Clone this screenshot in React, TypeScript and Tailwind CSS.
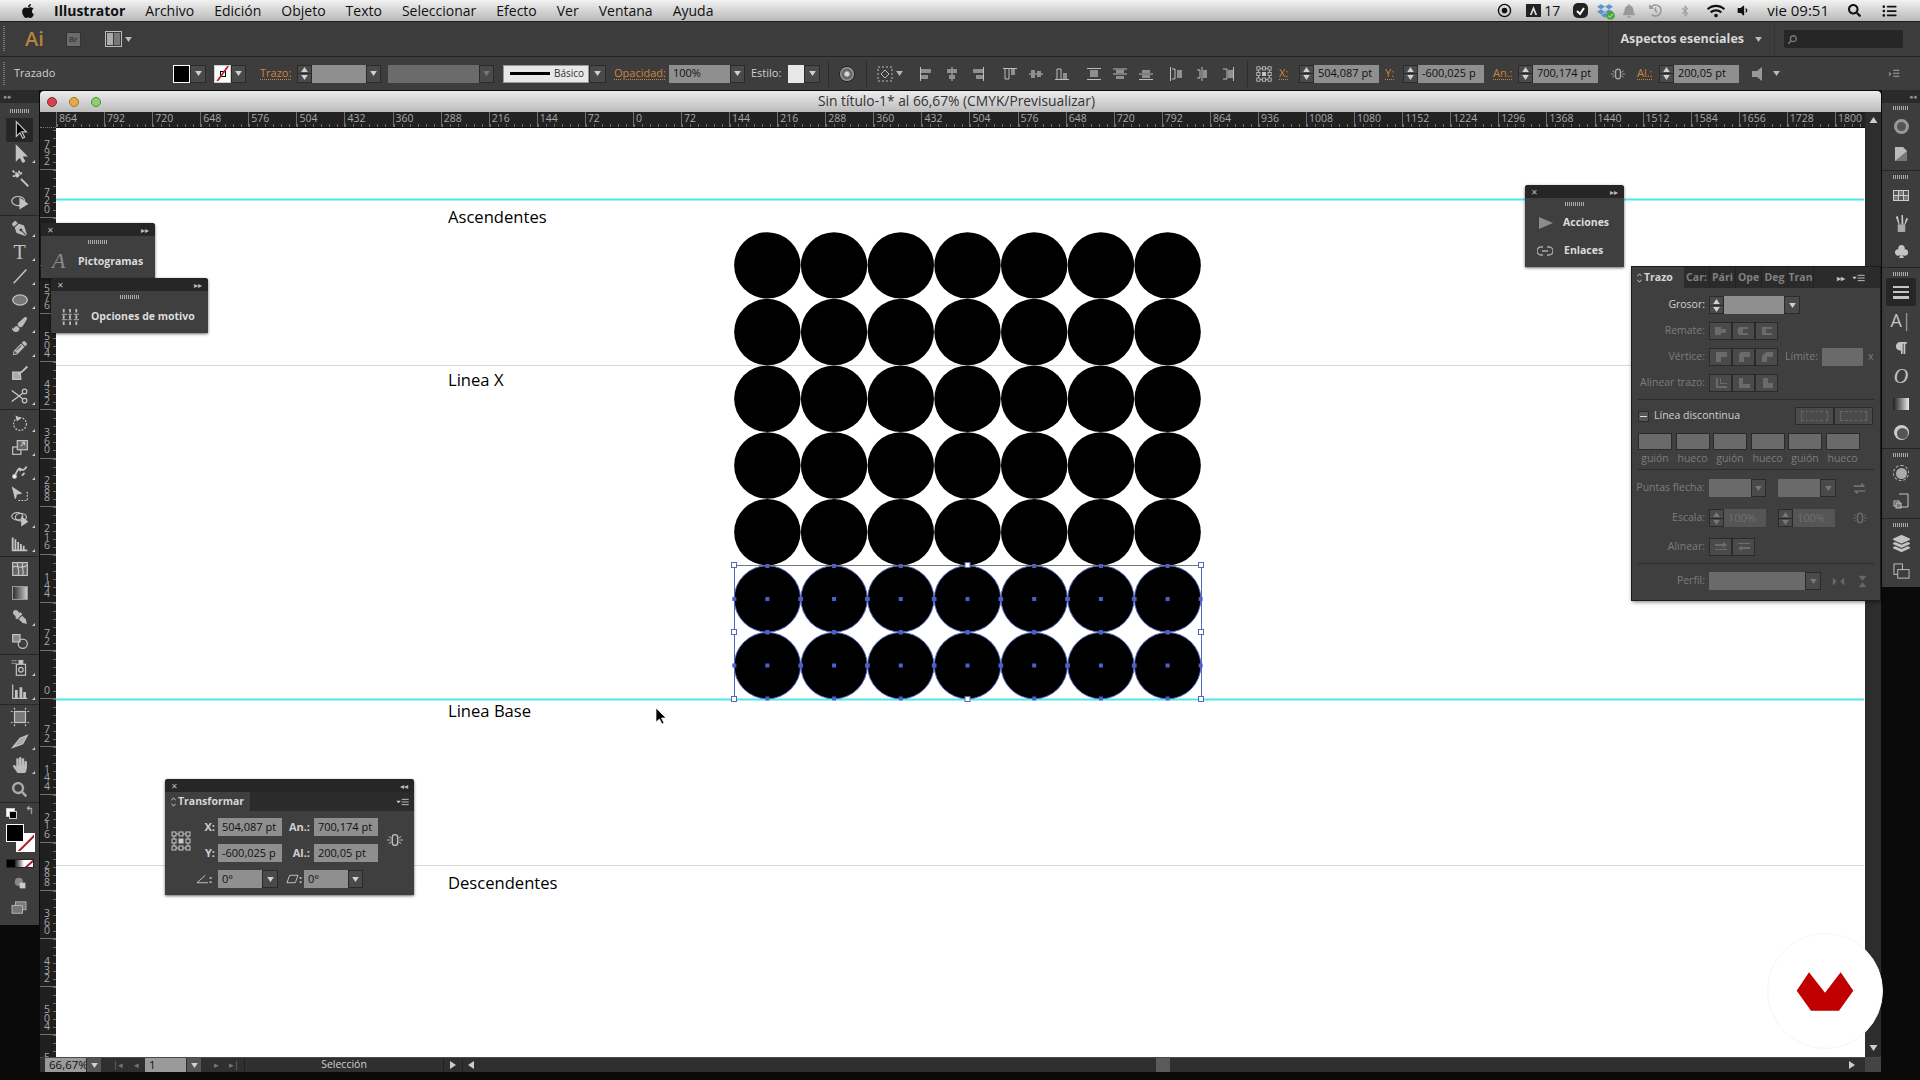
import React from 'react'
import clsx from 'clsx'
import { twMerge } from 'tailwind-merge'
import {
  FaApple, FaBell, FaBluetoothB, FaDropbox, FaEyeDropper, FaHandPaper, FaHistory, FaLayerGroup,
  FaListUl, FaParagraph, FaPaintBrush, FaPenNib, FaPencilAlt, FaSearch, FaVolumeDown, FaWifi, FaCheckCircle,
} from 'react-icons/fa'
import { BsFillSuitClubFill } from 'react-icons/bs'

const topLabels = [864, 792, 720, 648, 576, 504, 432, 360, 288, 216, 144, 72, 0, 72, 144, 216, 288, 360, 432, 504, 576, 648, 720, 792, 864, 936, 1008, 1080, 1152, 1224, 1296, 1368, 1440, 1512, 1584, 1656, 1728, 1800]
const sideLabels = [792, 720, 648, 576, 504, 432, 360, 288, 216, 144, 72, 0, 72, 144, 216, 288, 360, 432, 504, 576]

const Tri = ({ className }: { className?: string }) => (
  <svg viewBox="0 0 8 6" className={clsx('h-[5px] w-[7px] fill-current', className)}><path d="M0 0h8L4 6z" /></svg>
)

const Drop = ({ className, dim }: { className?: string; dim?: boolean }) => (
  <div className={twMerge('flex h-full items-center justify-center border border-[#2a2a2a] bg-[#4a4a4a]', dim ? 'text-[#777]' : 'text-[#d0d0d0]', className)}>
    <Tri />
  </div>
)

const Stepper = ({ dim }: { dim?: boolean }) => (
  <div className={clsx('flex h-full w-[15px] flex-col items-center justify-center gap-[1px] border border-[#2a2a2a] bg-[#4a4a4a]', dim ? 'text-[#777]' : 'text-[#d0d0d0]')}>
    <Tri className="h-[4px] rotate-180" />
    <div className="h-px w-full bg-[#2a2a2a]" />
    <Tri className="h-[4px]" />
  </div>
)

const Input = ({ className, children }: { className?: string; children?: React.ReactNode }) => (
  <div className={twMerge('flex h-full items-center overflow-hidden whitespace-nowrap bg-[#8f8f8f] pl-[4px] text-[11px] text-[#111]', className)}>{children}</div>
)

const Orange = ({ className, children }: { className?: string; children: React.ReactNode }) => (
  <span className={clsx('whitespace-nowrap text-[11px] text-[#c9853c] underline decoration-dotted underline-offset-2', className)}>{children}</span>
)

const Handle = ({ className }: { className?: string }) => (
  <div className={twMerge('h-[4px] w-[20px] bg-[repeating-linear-gradient(90deg,#aaa_0,#aaa_1px,transparent_1px,transparent_2px)]', className)} />
)

const RefPoint = ({ className }: { className?: string }) => (
  <svg viewBox="0 0 20 20" className={clsx('fill-none stroke-[#c8c8c8]', className)}>
    {[1, 8, 15].map(y => [1, 8, 15].map(x => (
      <rect key={`${x}${y}`} x={x} y={y} width="4" height="4" className={x === 8 && y === 8 ? 'fill-[#c8c8c8]' : ''} />
    )))}
    <path d="M5 3h3M12 3h3M5 17h3M12 17h3M3 5v3M3 12v3M17 5v3M17 12v3" />
  </svg>
)

const LinkIcon = ({ className }: { className?: string }) => (
  <svg viewBox="0 0 20 20" className={clsx('fill-none stroke-current', className)}>
    <rect x="7" y="4" width="6" height="12" rx="3" strokeWidth="1.6" />
    <path d="M3 6l3 2M3 14l3-2M17 6l-3 2M17 14l-3-2M1 10h4M15 10h4" />
  </svg>
)

const MenuIcon = ({ className }: { className?: string }) => (
  <svg viewBox="0 0 14 9" className={clsx('h-[8px] w-[13px]', className)}>
    <path d="M0 3h5L2.5 6z" className="fill-[#ccc]" />
    <path d="M6 1.5h8M6 4.5h8M6 7.5h8" className="stroke-[#ccc]" />
  </svg>
)

const UpDown = () => (
  <svg viewBox="0 0 6 12" className="mr-[2px] h-[10px] w-[5px] fill-none stroke-[#ddd]"><path d="M.5 4L3 1l2.5 3M.5 8L3 11l2.5-3" /></svg>
)

const AlignIcon = ({ d, r }: { d: string; r: string }) => (
  <div className="flex w-[26px] justify-center">
    <svg viewBox="0 0 16 16" className="h-[16px] w-[16px]">
      <path d={d} className="fill-none stroke-[#bdbdbd]" />
      <path d={r} className="fill-[#8f8f8f]" />
    </svg>
  </div>
)

const MenuBar = () => (
  <div className="flex h-[22px] items-center border-b border-[#1d1d1d] bg-gradient-to-b from-[#f2f2f2] to-[#b9b9b9] text-[14px] text-[#111]">
    <FaApple className="ml-[20px] h-[16px] w-[16px] text-[#111]" />
    <span className="ml-[18px] font-bold">Illustrator</span>
    <div className="ml-[20px] flex gap-[20px]">
      {['Archivo', 'Edición', 'Objeto', 'Texto', 'Seleccionar', 'Efecto', 'Ver', 'Ventana', 'Ayuda'].map(m => <span key={m}>{m}</span>)}
    </div>
    <div className="ml-auto flex items-center">
      <svg viewBox="0 0 16 16" className="h-[15px] w-[15px]"><circle cx="8" cy="8" r="6.5" className="fill-none stroke-[#111] stroke-[1.5]" /><circle cx="8" cy="8" r="3" className="fill-[#111]" /></svg>
      <div className="ml-[14px] flex h-[13px] w-[15px] items-center justify-center bg-[#222]"><svg viewBox="0 0 12 12" className="h-[11px] w-[11px]"><path d="M6 1L2 11h2l2-5 2 5h2z" className="fill-[#ddd]" /></svg></div>
      <span className="ml-[3px] text-[14px]">17</span>
      <div className="relative ml-[13px] h-[15px] w-[15px] rounded-[5px] bg-[#222]"><svg viewBox="0 0 15 15" className="h-[15px] w-[15px]"><path d="M4 8l3 3 4-6" className="fill-none stroke-white stroke-2" /></svg></div>
      <div className="relative ml-[9px]">
        <FaDropbox className="h-[16px] w-[16px] text-[#5b93cc]" />
        <FaCheckCircle className="absolute -bottom-[1px] -right-[2px] h-[9px] w-[9px] text-[#43a83a]" />
      </div>
      <FaBell className="ml-[9px] h-[14px] w-[14px] text-[#999]" />
      <FaHistory className="ml-[13px] h-[13px] w-[13px] text-[#999]" />
      <FaBluetoothB className="ml-[17px] h-[12px] w-[12px] text-[#999]" />
      <FaWifi className="ml-[16px] h-[16px] w-[18px] text-[#111]" />
      <FaVolumeDown className="ml-[12px] h-[13px] w-[11px] text-[#111]" />
      <span className="ml-[19px] text-[15px]">vie 09:51</span>
      <FaSearch className="ml-[19px] h-[13px] w-[13px] text-[#111]" />
      <FaListUl className="ml-[19px] mr-[21px] h-[14px] w-[19px] text-[#111]" />
    </div>
  </div>
)

const AppBar = () => (
  <div className="flex h-[35px] items-center border-b border-[#222] bg-[#3c3c3c]">
    <div className="ml-[3px] h-[26px] w-[2px] bg-[repeating-linear-gradient(180deg,#777_0,#777_1px,transparent_1px,transparent_2px)]" />
    <span className="ml-[20px] text-[20px] font-semibold leading-none text-[#b5843c]">Ai</span>
    <div className="ml-[22px] flex h-[15px] w-[15px] items-center justify-center border border-[#333] bg-[#6b6b6b] text-[8px] text-[#222]">Br</div>
    <div className="ml-[24px] flex h-[16px] w-[17px] gap-px border border-[#bbb] p-px">
      <div className="w-[6px] bg-[#aaa]" />
      <div className="flex-1 bg-[#777]" />
    </div>
    <Tri className="ml-[3px] text-[#bbb]" />
    <div className="ml-auto flex h-full items-center">
      <div className="h-full w-px bg-[#333]" />
      <span className="ml-[11px] text-[12.5px] font-bold text-[#d8d8d8]">Aspectos esenciales</span>
      <Tri className="ml-[11px] h-[3px] w-[5px] text-[#bbb]" />
      <div className="ml-[12px] h-full w-px bg-[#333]" />
      <div className="ml-[9px] mr-[17px] flex h-[18px] w-[119px] items-center rounded-[2px] bg-[#262626] pl-[4px]">
        <FaSearch className="h-[9px] w-[9px] -scale-x-100 text-[#777]" />
      </div>
    </div>
  </div>
)

const ControlBar = () => (
  <div className="flex h-[33px] items-center bg-[#3d3d3d] text-[#d0d0d0]">
    <div className="ml-[3px] h-[24px] w-[2px] bg-[repeating-linear-gradient(180deg,#777_0,#777_1px,transparent_1px,transparent_2px)]" />
    <span className="ml-[9px] w-[159px] text-[11px]">Trazado</span>
    <div className="flex h-[18px] items-center">
      <div className="h-full w-[17px] border border-white bg-black" />
      <Drop className="w-[16px]" />
      <div className="relative ml-[8px] h-full w-[17px] overflow-hidden border border-[#ccc] bg-white">
        <div className="absolute left-[5px] top-[5px] h-[6px] w-[6px] border border-black" />
        <svg viewBox="0 0 17 18" className="absolute inset-0"><path d="M2 18L15 0" className="stroke-[#c22033] stroke-2" /></svg>
      </div>
      <Drop className="w-[15px]" />
      <Orange className="ml-[14px] w-[31px]">Trazo:</Orange>
      <div className="ml-[6px] flex h-full"><Stepper /><Input className="w-[54px]" /><Drop className="w-[15px]" /></div>
      <div className="ml-[7px] flex h-full"><Input className="w-[91px] bg-[#6b6b6b]" /><Drop dim className="w-[15px]" /></div>
      <div className="ml-[9px] flex h-full">
        <div className="flex h-full w-[86px] items-center border border-[#999] bg-[#e8e8e8]">
          <div className="ml-[6px] h-[3px] w-[40px] bg-black" />
          <span className="ml-[4px] text-[10px] text-[#333]">Básico</span>
        </div>
        <Drop className="w-[17px]" />
      </div>
      <Orange className="ml-[8px] w-[49px]">Opacidad:</Orange>
      <div className="ml-[6px] flex h-full"><Input className="w-[61px]">100%</Input><Drop className="w-[15px]" /></div>
      <span className="ml-[6px] w-[29px] text-[11px]">Estilo:</span>
      <div className="ml-[8px] flex h-full"><div className="h-full w-[16px] bg-[#e8e8e8]" /><Drop className="w-[16px]" /></div>
    </div>
    <div className="ml-[8px] h-[26px] w-px bg-[#2c2c2c]" />
    <div className="ml-[10px] h-[16px] w-[16px] rounded-full border border-[#222] bg-[radial-gradient(circle_at_center,#ddd_15%,#555_40%,#aaa_70%,#666_100%)]" />
    <div className="ml-[11px] h-[26px] w-px bg-[#2c2c2c]" />
    <svg viewBox="0 0 16 16" className="ml-[10px] h-[16px] w-[16px] fill-none stroke-[#bbb]"><rect x="1" y="1" width="14" height="14" strokeDasharray="2 2" /><path d="M8 4l4 4-4 4-4-4z" /></svg>
    <Tri className="ml-[3px] text-[#bbb]" />
    <div className="ml-[10px] flex">
      <AlignIcon d="M2.5 1v14" r="M3 3h10v4H3zM3 9h7v4H3z" />
      <AlignIcon d="M8 1v14" r="M3 3h10v4H3zM5 9h6v4H5z" />
      <AlignIcon d="M13.5 1v14" r="M3 3h10v4H3zM6 9h7v4H6z" />
    </div>
    <div className="ml-[6px] flex">
      <AlignIcon d="M1 2.5h14M3 3v10h4V3" r="M9 3h4v6H9z" />
      <AlignIcon d="M1 8h14" r="M3 4h4v8H3zM9 5h4v6H9z" />
      <AlignIcon d="M1 13.5h14M3 13V3h4v10" r="M9 7h4v6H9z" />
    </div>
    <div className="ml-[6px] flex">
      <AlignIcon d="M1 2.5h14M1 13.5h14" r="M4 4h8v7H4z" />
      <AlignIcon d="M1 8h14M1 3h14" r="M4 4h8v3H4zM4 10h8v3H4z" />
      <AlignIcon d="M1 13.5h14M1 8h14" r="M4 4h8v3H4zM4 9h8v3H4z" />
    </div>
    <div className="ml-[4px] flex">
      <AlignIcon d="M2.5 1v14M4 3h3v10H4" r="M9 4h5v8H9z" />
      <AlignIcon d="M8 1v14M3 4h3v8H3" r="M9 4h4v8H9z" />
      <AlignIcon d="M13.5 1v14M3 3h4v10H3" r="M8 4h5v8H8z" />
    </div>
    <div className="ml-[6px] h-[26px] w-px bg-[#2c2c2c]" />
    <RefPoint className="ml-[8px] h-[16px] w-[16px]" />
    <Orange className="ml-[7px] w-[9px]">X:</Orange>
    <div className="ml-[11px] flex h-[18px]"><Stepper /><Input className="w-[65px]">504,087 pt</Input></div>
    <Orange className="ml-[6px] w-[9px]">Y:</Orange>
    <div className="ml-[9px] flex h-[18px]"><Stepper /><Input className="w-[66px]">-600,025 p</Input></div>
    <Orange className="ml-[9px] w-[18px]">An.:</Orange>
    <div className="ml-[7px] flex h-[18px]"><Stepper /><Input className="w-[65px]">700,174 pt</Input></div>
    <LinkIcon className="ml-[12px] h-[16px] w-[16px] text-[#aaa]" />
    <Orange className="ml-[11px] w-[15px]">Al.:</Orange>
    <div className="ml-[7px] flex h-[18px]"><Stepper /><Input className="w-[65px]">200,05 pt</Input></div>
    <svg viewBox="0 0 16 16" className="ml-[11px] h-[16px] w-[16px] fill-[#999]"><path d="M2 5h5l5-4v14l-5-4H2z" /></svg>
    <Tri className="ml-[7px] text-[#bbb]" />
    <svg viewBox="0 0 16 16" className="ml-[107px] h-[12px] w-[14px] fill-none stroke-[#ccc]"><path d="M7 3h8M7 7h8M7 11h8M1 6l3 2 -3 2" /></svg>
  </div>
)

const Corner = () => <div className="absolute bottom-[3px] right-[4px] h-0 w-0 border-b-[3px] border-l-[3px] border-b-[#ccc] border-l-transparent" />

const S = ({ children }: { children: React.ReactNode }) => (
  <svg viewBox="0 0 24 24" className="h-[22px] w-[22px] fill-none stroke-[#c4c4c4] stroke-[1.3]">{children}</svg>
)

const Tool = ({ children, corner, active }: { children: React.ReactNode; corner?: boolean; active?: boolean }) => (
  <div className={clsx('relative flex h-[24px] shrink-0 items-center justify-center text-[#bdbdbd]', active && 'mx-[6px] rounded-[1px] bg-[#262626]')}>
    {children}
    {corner && <Corner />}
  </div>
)

const ToolSep = ({ className }: { className?: string }) => <div className={twMerge('flex h-[2px] shrink-0 items-center', className)}><div className="h-px w-full bg-[#262626]" /></div>

const Toolbar = () => (
  <div className="flex h-[835px] w-[39px] flex-col bg-[#3d3d3d]">
    <div className="flex h-[13px] shrink-0 items-center bg-[#2a2a2a] pl-[4px] text-[7px] leading-none text-[#999]">▸▸</div>
    <div className="flex h-[15px] shrink-0 items-center justify-center"><Handle /></div>
    <Tool active><S><path d="M8 3v16l4-4 3 6 2-1-3-6h5z" className="fill-black" /></S></Tool>
    <Tool corner><S><path d="M8 3v16l4-4 3 6 2-1-3-6h5z" className="fill-[#c4c4c4]" /></S></Tool>
    <Tool><S><path d="M7 6l2 2M4 10h3M11 4v3M4 4l2 2M14 6l-2 2M13 13l8 8" className="stroke-2" /><path d="M9 7l2 2-2 2-2-2z" className="fill-[#ddd]" /></S></Tool>
    <Tool><S><ellipse cx="10" cy="11" rx="7" ry="5" /><path d="M12 8v11l8-5z" className="fill-[#c4c4c4]" /></S></Tool>
    <ToolSep />
    <Tool corner><FaPenNib className="h-[15px] w-[15px] -scale-x-100 text-[#bbb]" /></Tool>
    <Tool corner><span className="font-['Liberation_Serif',serif] text-[20px] leading-none text-[#c4c4c4]">T</span></Tool>
    <Tool corner><S><path d="M5 20L19 5" className="stroke-[1.6]" /></S></Tool>
    <Tool corner><S><ellipse cx="12" cy="12" rx="8" ry="5.5" className="fill-[#777]" /></S></Tool>
    <Tool corner><FaPaintBrush className="h-[15px] w-[15px] text-[#bbb]" /></Tool>
    <Tool corner><FaPencilAlt className="h-[14px] w-[14px] text-[#bbb]" /></Tool>
    <Tool><S><path d="M4 12l8 0 1 8H4z" className="fill-[#aaa]" /><path d="M10 14c4-1 7-5 10-8" className="stroke-2" /></S></Tool>
    <Tool corner><S><circle cx="17" cy="7" r="2.5" /><circle cx="17" cy="17" r="2.5" /><path d="M3 6l12 9M3 18l12-9" className="stroke-[1.6]" /></S></Tool>
    <ToolSep className="h-[3px]" />
    <Tool corner><S><circle cx="12" cy="13" r="7" strokeDasharray="2 1.5" /><path d="M8 5l4 2-3 2z" className="fill-[#c4c4c4]" /></S></Tool>
    <Tool corner><S><rect x="4" y="12" width="9" height="8" /><rect x="9" y="5" width="11" height="10" className="fill-[#666]" /><path d="M13 11l4-4M14 7h3v3" /></S></Tool>
    <Tool corner><S><path d="M6 18c3-7 5-10 7-8s5 0 6-3M10 9l3 3M14 17l3-3" className="stroke-2" /><circle cx="6" cy="18" r="2" className="fill-white" /></S></Tool>
    <Tool><S><path d="M4 4l9 6-5 1-1 5z" className="fill-[#c4c4c4]" /><path d="M10 18h10V8" strokeDasharray="2 1.5" /></S></Tool>
    <Tool corner><S><ellipse cx="9" cy="9" rx="6" ry="4" /><ellipse cx="13" cy="10" rx="6" ry="4" /><path d="M14 10v9l6-4z" className="fill-[#c4c4c4]" /></S></Tool>
    <Tool corner><S><path d="M4 6v14h16M7 8v12M10 11v9M13 13v7M16 15v5" className="stroke-2" /></S></Tool>
    <ToolSep />
    <Tool><S><rect x="4" y="5" width="16" height="14" className="fill-[#666]" /><path d="M4 10c5-3 8 3 16-2M9 5c0 5 3 8 1 14M15 5c-2 5 2 8 0 14" /></S></Tool>
    <Tool><div className="h-[14px] w-[16px] border border-[#999] bg-gradient-to-r from-[#333] to-[#ccc]" /></Tool>
    <Tool corner><FaEyeDropper className="h-[14px] w-[14px] -scale-x-100 text-[#bbb]" /></Tool>
    <Tool><S><rect x="4" y="5" width="8" height="8" className="fill-[#888]" /><circle cx="15" cy="15" r="5" /></S></Tool>
    <ToolSep />
    <Tool corner><S><rect x="8" y="9" width="10" height="12" /><rect x="11" y="5" width="4" height="3" className="fill-[#c4c4c4]" /><circle cx="13" cy="15" r="2.5" /><path d="M3 5h5M3 8h5" strokeDasharray="1 1" /></S></Tool>
    <Tool corner><S><path d="M4 5v15h16" /><path d="M8 11v9M13 8v12M17 13v7" className="stroke-[3]" /></S></Tool>
    <ToolSep />
    <Tool><S><rect x="6" y="6" width="12" height="12" className="fill-[#777]" /><path d="M2 6h2M20 6h2M2 18h2M20 18h2M6 2v2M18 2v2M6 20v2M18 20v2" /></S></Tool>
    <Tool corner><S><path d="M4 19l8-10 8-3-5 9z" className="fill-[#aaa]" /></S></Tool>
    <Tool corner><FaHandPaper className="h-[16px] w-[16px] text-[#bbb]" /></Tool>
    <Tool><FaSearch className="h-[15px] w-[15px] text-[#aaa]" /></Tool>
    <ToolSep />
    <div className="relative h-[117px] shrink-0">
      <div className="absolute left-[6px] top-[5px] h-[9px] w-[9px] border border-[#ccc] bg-white" />
      <div className="absolute left-[9px] top-[8px] h-[8px] w-[8px] border border-[#ccc] bg-black" />
      <span className="absolute left-[25px] top-[1px] text-[11px] leading-none text-[#bbb]">↰</span>
      <div className="absolute left-[16px] top-[30px] h-[19px] w-[19px] overflow-hidden border border-white bg-white">
        <svg viewBox="0 0 19 19" className="h-[19px] w-[19px]"><path d="M0 19L19 0" className="stroke-[#b01c30] stroke-2" /></svg>
      </div>
      <div className="absolute left-[6px] top-[21px] h-[18px] w-[18px] border border-white bg-black" />
      <div className="absolute left-[6px] top-[56px] flex h-[9px] w-[28px] border border-[#222]">
        <div className="w-[9px] bg-black" />
        <div className="w-[9px] bg-gradient-to-r from-[#222] to-white" />
        <div className="w-[10px] overflow-hidden bg-white"><svg viewBox="0 0 10 9" className="h-[9px] w-[10px]"><path d="M0 9L10 0" className="stroke-[#b01c30] stroke-2" /></svg></div>
      </div>
      <svg viewBox="0 0 16 16" className="absolute left-[14px] top-[74px] h-[13px] w-[13px]"><circle cx="6" cy="6" r="5" className="fill-[#888]" /><rect x="7" y="7" width="7" height="7" className="fill-[#ccc]" /></svg>
      <svg viewBox="0 0 18 16" className="absolute left-[10px] top-[98px] h-[14px] w-[18px] fill-[#777] stroke-[#bbb]"><rect x="5" y="1" width="12" height="9" /><rect x="1" y="5" width="12" height="9" /></svg>
    </div>
  </div>
)

const TopRuler = () => (
  <div className="flex h-[16px] bg-[#222]">
    <div className="w-[16px] shrink-0 border-b border-dotted border-[#777]" />
    <div className="flex w-[1809px] shrink-0 overflow-hidden border-b border-[#111]">
      {topLabels.map((n, i) => (
        <div key={i} className="h-full w-[48.08px] shrink-0 border-l border-[#6f6f6f] bg-[repeating-linear-gradient(90deg,#6f6f6f_0,#6f6f6f_1px,transparent_1px,transparent_8px)] bg-[length:100%_3px] bg-bottom bg-no-repeat pl-[2px] text-[10.5px] leading-[12px] text-[#a8a8a8]">{n}</div>
      ))}
    </div>
    <div className="flex w-[16px] shrink-0 items-center justify-center bg-[#2d2d2d] text-[#ccc]"><Tri className="h-[6px] w-[9px] rotate-180" /></div>
  </div>
)

const SideRuler = () => (
  <div className="h-[929px] w-[16px] shrink-0 overflow-hidden bg-[#1f1f1f]">
    <div className="-mt-[7px]">
      {sideLabels.map((n, i) => (
        <div key={i} className="flex h-[48.08px] flex-col items-center justify-end border-t border-[#6f6f6f] bg-[repeating-linear-gradient(180deg,#6f6f6f_0,#6f6f6f_1px,transparent_1px,transparent_8px)] bg-[length:3px_100%] bg-right bg-no-repeat pb-[4px] pr-[2px] text-[10.5px] leading-[8.4px] text-[#a8a8a8]">
          {String(n).split('').map((d, j) => <span key={j}>{d}</span>)}
        </div>
      ))}
    </div>
  </div>
)

const cx = Array.from({ length: 7 }, (_, i) => 734 + 33.36 + 66.71 * i)
const cy = Array.from({ length: 7 }, (_, i) => 232 + 33.36 + 66.71 * i)

const Artwork = () => (
  <svg viewBox="56 128 1809 929" className="absolute inset-0 h-[929px] w-[1809px]">
    <path d="M56 199.5h1808M56 699.5h1808" className="stroke-[#4fe6ea] stroke-2" />
    <path d="M56 365.5h1808M56 865.5h1808" className="stroke-[#d8d8d8]" />
    {cy.map((y, r) => cx.map((x, c) => (
      <circle key={`${r}-${c}`} cx={x} cy={y} r="33.2" className={r > 4 ? 'fill-black stroke-[#5566bb]' : 'fill-black'} />
    )))}
    <path d="M734.5 565v134" className="stroke-[#5566bb]" />
    <path d="M1201.5 565v134" className="stroke-[#5566bb]" />
    <path d="M734 565.5h467" className="stroke-[#777]" />
    {cy.slice(5).map(y => cx.map(x => (
      <path key={`${x}-${y}`} d={`M${x - 2} ${y - 2}h4v4h-4zM${x - 2} ${y - 35}h4v4h-4zM${x - 2} ${y + 31}h4v4h-4zM${x - 35} ${y - 2}h4v4h-4zM${x + 31} ${y - 2}h4v4h-4z`} className="fill-[#4a5fd0]" />
    )))}
    {[[734, 565], [967.5, 565], [1201, 565], [734, 632], [1201, 632], [734, 699], [967.5, 699], [1201, 699]].map(([x, y]) => (
      <rect key={`${x}${y}`} x={x - 2.5} y={y - 2.5} width="5" height="5" className="fill-white stroke-[#5566bb]" />
    ))}
  </svg>
)

const StatusBar = () => (
  <div className="flex h-[15px] items-center border-t border-[#4a4a4a] bg-[#2f2f2f] text-[#777]">
    <div className="ml-[5px] flex h-full items-center">
      <Input className="w-[41px] bg-[#9a9a9a] pl-[4px] text-[11.5px]">66,67%</Input>
      <Drop className="ml-px w-[14px] border-0 bg-[#555]" />
    </div>
    <span className="ml-[8px] w-[18px] text-center text-[9px]">|◂</span>
    <span className="w-[18px] text-center text-[9px]">◂</span>
    <div className="flex h-full items-center">
      <Input className="w-[41px] bg-[#9a9a9a] text-[11.5px]">1</Input>
      <Drop className="ml-px w-[14px] border-0 bg-[#555]" />
    </div>
    <span className="ml-[6px] w-[18px] text-center text-[9px]">▸</span>
    <span className="w-[18px] text-center text-[9px]">▸|</span>
    <div className="ml-[1px] flex h-full w-[200px] items-center justify-center border-x border-[#222] text-[10.5px] text-[#d0d0d0]">Selección</div>
    <div className="flex h-full w-[19px] items-center justify-center border-r border-[#222] text-[#ccc]"><Tri className="h-[6px] w-[8px] -rotate-90" /></div>
    <div className="flex h-full w-[16px] items-center justify-center text-[#ccc]"><Tri className="h-[6px] w-[8px] rotate-90" /></div>
    <div className="ml-[677px] h-full w-[14px] bg-[#5a5a5a]" />
    <div className="ml-auto flex h-full w-[26px] items-center justify-center text-[#ccc]"><Tri className="h-[6px] w-[8px] -rotate-90" /></div>
    <div className="h-full w-[16px] bg-[#444]" />
  </div>
)

const Doc = () => (
  <div className="flex h-[983px] w-[1841px] flex-col">
    <div className="mt-px flex h-[21px] shrink-0 items-center rounded-t-[4px] bg-gradient-to-b from-[#ececec] to-[#bcbcbc]">
      <div className="ml-[7px] h-[10px] w-[10px] rounded-full border border-[#8a2b30] bg-[#d8434b]" />
      <div className="ml-[12px] h-[10px] w-[10px] rounded-full border border-[#a5741d] bg-[#e6ab48]" />
      <div className="ml-[12px] h-[10px] w-[10px] rounded-full border border-[#4a8a3a] bg-[#8fd06a]" />
      <span className="ml-[717px] text-[13.8px] text-[#333]">Sin título-1* al 66,67% (CMYK/Previsualizar)</span>
    </div>
    <TopRuler />
    <div className="flex">
      <SideRuler />
      <div className="relative h-[929px] w-[1809px] bg-white">
        <Artwork />
        <span className="absolute left-[392px] top-[77px] text-[16.6px] text-black">Ascendentes</span>
        <span className="absolute left-[392px] top-[240px] text-[16.6px] text-black">Linea X</span>
        <span className="absolute left-[392px] top-[571px] text-[16.6px] text-black">Linea Base</span>
        <span className="absolute left-[392px] top-[743px] text-[16.6px] text-black">Descendentes</span>
        <svg viewBox="0 0 12 18" className="absolute left-[599px] top-[579px] h-[18px] w-[12px]"><path d="M1 1v14l3.5-3 2.5 5 2-1-2.5-5H11z" className="fill-black stroke-white stroke-[0.7]" /></svg>
      </div>
      <div className="flex h-[929px] w-[16px] flex-col items-center justify-end bg-[#2d2d2d] pb-[6px] text-[#ccc]"><Tri className="h-[6px] w-[9px]" /></div>
    </div>
    <StatusBar />
  </div>
)

const DockSection = ({ children, className }: { children: React.ReactNode; className?: string }) => (
  <div className={twMerge('flex shrink-0 flex-col items-center border-b border-[#262626] pt-[2px]', className)}>
    <div className="flex h-[8px] shrink-0 items-center"><Handle className="w-[16px]" /></div>
    {children}
  </div>
)

const DockCell = ({ children, active }: { children: React.ReactNode; active?: boolean }) => (
  <div className={clsx('flex h-[28px] w-[30px] shrink-0 items-center justify-center text-[#c4c4c4]', active && 'rounded-[2px] bg-[#262626]')}>{children}</div>
)

const Dock = () => (
  <div className="ml-px flex h-[497px] w-[38px] flex-col bg-[#3d3d3d]">
    <div className="flex h-[13px] shrink-0 items-center justify-end bg-[#2a2a2a] pr-[3px] text-[7px] leading-none text-[#999]">◂◂</div>
    <DockSection className="pb-[2px] pt-[1px]">
      <DockCell><div className="h-[15px] w-[15px] rounded-full border-[3px] border-[#999] bg-[#555]" /></DockCell>
      <DockCell><svg viewBox="0 0 16 16" className="h-[16px] w-[16px] fill-[#bbb]"><path d="M2 1h8l4 4v10H2z" /><path d="M2 15L14 5v10z" className="fill-[#777]" /></svg></DockCell>
    </DockSection>
    <DockSection className="pb-[2px]">
      <DockCell><div className="grid h-[11px] w-[16px] grid-cols-3 gap-px border border-[#ccc] bg-[#ccc]"><div className="bg-[#555]" /><div className="bg-[#777]" /><div className="bg-[#555]" /><div className="bg-[#777]" /><div className="bg-[#555]" /><div className="bg-[#777]" /></div></DockCell>
      <DockCell><svg viewBox="0 0 16 20" className="h-[19px] w-[15px] fill-[#aaa]"><path d="M4 11h8v8H4z" /><path d="M5 11L2 3l2-1 2 9zM8 11V1h1.5l.5 10zM11 11l2-7 2 1-3 6z" className="fill-[#ccc]" /></svg></DockCell>
      <DockCell><BsFillSuitClubFill className="h-[15px] w-[15px]" /></DockCell>
    </DockSection>
    <DockSection className="pb-[2px]">
      <DockCell active><div className="flex flex-col gap-[3px]"><div className="h-[2px] w-[16px] bg-[#c4c4c4]" /><div className="h-[2px] w-[16px] bg-[#c4c4c4]" /><div className="h-[3px] w-[16px] bg-[#c4c4c4]" /></div></DockCell>
      <DockCell><span className="text-[18px] leading-none">A<span className="font-light">|</span></span></DockCell>
      <DockCell><FaParagraph className="h-[14px] w-[12px]" /></DockCell>
      <DockCell><span className="font-['Liberation_Serif',serif] text-[20px] italic leading-none">O</span></DockCell>
      <DockCell><div className="h-[12px] w-[16px] bg-gradient-to-r from-[#222] to-[#eee]" /></DockCell>
      <DockCell><div className="relative h-[15px] w-[15px] rounded-full bg-[#ccc]"><div className="absolute left-[3px] top-[3px] h-[11px] w-[11px] rounded-full bg-[#555]" /></div></DockCell>
    </DockSection>
    <DockSection className="pb-[3px]">
      <DockCell><div className="flex h-[16px] w-[16px] items-center justify-center rounded-full border border-dashed border-[#bbb]"><div className="h-[11px] w-[11px] rounded-full bg-[#aaa]" /></div></DockCell>
      <DockCell><svg viewBox="0 0 16 16" className="h-[16px] w-[16px] fill-none stroke-[#c4c4c4]"><path d="M6 1h9v13H6" /><rect x="1" y="8" width="5" height="5" /><rect x="3" y="10" width="5" height="5" className="fill-[#777]" /></svg></DockCell>
    </DockSection>
    <DockSection className="border-b-0">
      <DockCell><FaLayerGroup className="h-[17px] w-[17px]" /></DockCell>
      <DockCell><svg viewBox="0 0 18 18" className="h-[17px] w-[17px] fill-none stroke-[#c4c4c4]"><rect x="1" y="1" width="9" height="11" /><rect x="5" y="7" width="12" height="9" className="fill-[#3d3d3d]" /></svg></DockCell>
    </DockSection>
  </div>
)

const PanelTop = ({ double }: { double?: boolean }) => (
  <div className="flex h-[13px] items-center justify-between rounded-t-[3px] bg-[#262626] px-[6px] text-[8px] leading-none text-[#bbb]">
    <span>✕</span>
    <span>{double ? '◂◂' : '▸▸'}</span>
  </div>
)

const MiniPanel = ({ className, icon, label, iconClass }: { className: string; icon: React.ReactNode; label: string; iconClass: string }) => (
  <div className={clsx('absolute rounded-t-[3px] bg-[#3f3f3f] shadow-[0_1px_3px_rgba(0,0,0,0.6)]', className)}>
    <PanelTop />
    <div className="flex h-[12px] items-center justify-center"><Handle /></div>
    <div className="flex h-[28px] items-center">
      <div className={iconClass}>{icon}</div>
      <span className="whitespace-nowrap text-[10.5px] font-bold text-[#dcdcdc]">{label}</span>
    </div>
  </div>
)

const Row = ({ label, bright, className, children }: { label: string; bright?: boolean; className?: string; children: React.ReactNode }) => (
  <div className={clsx('flex h-[18px] items-center', className)}>
    <span className={clsx('w-[73px] whitespace-nowrap text-right text-[10.5px]', bright ? 'text-[#cfcfcf]' : 'text-[#7d7d7d]')}>{label}</span>
    <div className="ml-[4px] flex h-full items-center">{children}</div>
  </div>
)

const Btn = ({ d }: { d: string }) => (
  <div className="flex h-full w-[23px] items-center justify-center border border-[#2a2a2a] bg-[#4a4a4a]">
    <svg viewBox="0 0 14 12" className="h-[12px] w-[14px]"><path d={d} className="fill-[#6b6b6b]" /></svg>
  </div>
)

const capD = ['M1 2h6v2h5v4H7v2H1z', 'M2 2h9v2H6v4h5v2H2c-2-2-2-6 0-8z', 'M2 2h10v2H6v4h6v2H2z']
const cornerD = ['M2 1h11v5H7v5H2z', 'M5 1h8v5H7v5H2V4c0-1 1-3 3-3z', 'M6 1h7v5H7v5H2V5z']
const alignD = ['M2 1h2v8h9v2H2zM6 1h1v5h6v1H6z', 'M2 1h4v6h7v4H2z', 'M3 1h5v5h5v5H3z']
const arrowD = ['M1 3h8V1l4 3-4 3V5H1zM1 8h12v1H1z', 'M1 2h12v1H1zM5 5l-4 2 4 3V8h8V6H5z']

const Sep = ({ className }: { className?: string }) => <div className={clsx('mx-[6px] h-px bg-[#2c2c2c]', className)} />

const Trazo = () => (
  <div className="absolute left-[1632px] top-[267px] h-[333px] w-[248px] bg-[#3f3f3f] shadow-[0_0_0_1px_#1c1c1c,0_2px_4px_rgba(0,0,0,0.5)]">
    <div className="flex h-[21px] items-center bg-[#2b2b2b] text-[10.5px] font-bold text-[#808080]">
      <div className="flex h-full w-[52px] items-center bg-[#3f3f3f] pl-[5px] text-[#d6d6d6]"><UpDown />Trazo</div>
      {['Car:', 'Pári', 'Ope', 'Deg', 'Tran'].map(t => (
        <div key={t} className="flex h-full w-[26px] items-center justify-center overflow-hidden border-r border-[#222]">{t}</div>
      ))}
      <span className="ml-[23px] text-[8px] text-[#bbb]">▸▸</span>
      <MenuIcon className="ml-[7px]" />
    </div>
    <Row label="Grosor:" bright className="mt-[8px]"><Stepper /><Input className="w-[60px]" /><Drop className="w-[16px]" /></Row>
    <Row label="Remate:" className="mt-[8px]">{capD.map(d => <Btn key={d} d={d} />)}</Row>
    <Row label="Vértice:" className="mt-[8px]">
      {cornerD.map(d => <Btn key={d} d={d} />)}
      <span className="ml-[7px] w-[37px] text-[10.5px] text-[#7d7d7d]">Límite:</span>
      <Input className="w-[41px] bg-[#6a6a6a]" />
      <span className="ml-[5px] text-[10.5px] text-[#7d7d7d]">x</span>
    </Row>
    <Row label="Alinear trazo:" className="mt-[8px]">{alignD.map(d => <Btn key={d} d={d} />)}</Row>
    <Sep className="mt-[7px]" />
    <div className="mt-[7px] flex h-[18px] items-center pl-[6px]">
      <div className="flex h-[11px] w-[11px] items-center justify-center border border-[#2a2a2a] bg-[#555]"><div className="h-px w-[7px] bg-[#ddd]" /></div>
      <span className="ml-[5px] text-[10.5px] text-[#cfcfcf]">Línea discontinua</span>
      <div className="ml-auto mr-[7px] flex h-full">
        {[0, 1].map(i => (
          <div key={i} className="flex h-full w-[39px] items-center justify-center border border-[#2a2a2a] bg-[#4a4a4a]"><div className="h-[10px] w-[27px] border border-dashed border-[#666]" /></div>
        ))}
      </div>
    </div>
    <div className="mt-[8px] flex h-[17px] gap-[3.5px] pl-[6px]">
      {[0, 1, 2, 3, 4, 5].map(i => <div key={i} className="h-full w-[34px] border border-[#2a2a2a] bg-[#6a6a6a]" />)}
    </div>
    <div className="mt-px flex h-[15px] gap-[3.5px] pl-[6px] text-[10.5px] text-[#7d7d7d]">
      {['guión', 'hueco', 'guión', 'hueco', 'guión', 'hueco'].map((t, i) => <span key={i} className="w-[34px] text-center">{t}</span>)}
    </div>
    <Sep className="mt-[3px]" />
    <Row label="Puntas flecha:" className="mt-[9px]">
      <Input className="w-[42px] bg-[#6a6a6a]" /><Drop dim className="w-[15px]" />
      <Input className="ml-[12px] w-[42px] bg-[#6a6a6a]" /><Drop dim className="w-[16px]" />
      <svg viewBox="0 0 16 16" className="ml-[17px] h-[13px] w-[13px] fill-none stroke-[#6f6f6f] stroke-2"><path d="M1 5h13M10 2l4 3M15 11H2M6 14l-4-3" /></svg>
    </Row>
    <Row label="Escala:" className="mt-[12px]">
      <Stepper dim /><Input className="w-[42px] bg-[#555] text-[#6f6f6f]">100%</Input>
      <div className="ml-[12px] flex h-full"><Stepper dim /><Input className="w-[42px] bg-[#555] text-[#6f6f6f]">100%</Input></div>
      <LinkIcon className="ml-[17px] h-[16px] w-[16px] text-[#6f6f6f]" />
    </Row>
    <Row label="Alinear:" className="mt-[11px]">{arrowD.map(d => <Btn key={d} d={d} />)}</Row>
    <Sep className="mt-[7px]" />
    <Row label="Perfil:" className="mt-[8px]">
      <Input className="w-[96px] bg-[#6a6a6a]" /><Drop dim className="w-[16px]" />
      <svg viewBox="0 0 16 16" className="ml-[11px] h-[13px] w-[13px] fill-[#666]"><path d="M1 3l5 5-5 5zM15 3l-5 5 5 5z" /></svg>
      <svg viewBox="0 0 16 16" className="ml-[11px] h-[13px] w-[13px] fill-[#666]"><path d="M3 1h10L8 7zM3 15h10L8 9z" /></svg>
    </Row>
  </div>
)

const Transformar = () => (
  <div className="absolute left-[165px] top-[779px] h-[116px] w-[249px] rounded-t-[3px] bg-[#3f3f3f] shadow-[0_1px_3px_rgba(0,0,0,0.6)]">
    <PanelTop double />
    <div className="flex h-[19px] items-center bg-[#2b2b2b]">
      <div className="flex h-full w-[85px] items-center bg-[#3f3f3f] pl-[6px] text-[10.5px] font-bold text-[#d6d6d6]"><UpDown />Transformar</div>
      <MenuIcon className="ml-auto mr-[5px]" />
    </div>
    <div className="relative mt-[7px] flex flex-col gap-[8px] pl-[33px] text-[11px] font-bold text-[#cfcfcf]">
      <RefPoint className="absolute left-[6px] top-[13px] h-[20px] w-[20px]" />
      <LinkIcon className="absolute left-[221px] top-[13px] h-[18px] w-[18px] text-[#bbb]" />
      <div className="flex h-[18px] items-center">
        <span className="w-[17px] text-right">X:</span>
        <Input className="ml-[3px] w-[64px] font-normal">504,087 pt</Input>
        <span className="w-[28px] text-right">An.:</span>
        <Input className="ml-[4px] w-[64px] font-normal">700,174 pt</Input>
      </div>
      <div className="flex h-[18px] items-center">
        <span className="w-[17px] text-right">Y:</span>
        <Input className="ml-[3px] w-[64px] font-normal">-600,025 p</Input>
        <span className="w-[28px] text-right">Al.:</span>
        <Input className="ml-[4px] w-[64px] font-normal">200,05 pt</Input>
      </div>
      <div className="flex h-[18px] items-center">
        <svg viewBox="0 0 14 10" className="ml-[-2px] h-[10px] w-[13px] fill-none stroke-[#c8c8c8]"><path d="M13 9H1L10 1" /></svg>
        <span className="w-[6px]">:</span>
        <Input className="ml-[3px] w-[44px] font-normal">0°</Input>
        <Drop className="w-[16px]" />
        <svg viewBox="0 0 14 10" className="ml-[8px] h-[10px] w-[13px] fill-none stroke-[#c8c8c8]"><path d="M4 1h9l-3 8H1z" /></svg>
        <span className="w-[5px]">:</span>
        <Input className="w-[44px] font-normal">0°</Input>
        <Drop className="w-[15px]" />
      </div>
    </div>
  </div>
)

const App: React.FC = () => {
  return (
    <div className="relative h-[1080px] w-[1920px] overflow-hidden bg-[#0a0a0a] font-['Open_Sans',sans-serif]">
      <MenuBar />
      <AppBar />
      <ControlBar />
      <div className="flex items-start">
        <Toolbar />
        <div className="w-px" />
        <Doc />
        <Dock />
      </div>

      <MiniPanel className="left-[41px] top-[223px] h-[55px] w-[114px]" icon={<span className="font-['Liberation_Serif',serif] text-[22px] italic leading-none text-[#8a8a8a]">A</span>} iconClass="ml-[11px] w-[26px]" label="Pictogramas" />
      <MiniPanel
        className="left-[51px] top-[278px] h-[55px] w-[157px]"
        icon={<svg viewBox="0 0 20 20" className="h-[18px] w-[18px] stroke-[#bbb] stroke-2"><path d="M3 1v4M3 8v4M3 15v4M10 1v4M10 8v4M10 15v4M17 1v4M17 8v4M17 15v4" /><path d="M1 7h6M8 7h4M14 7h6M1 13h6M8 13h4M14 13h6" className="stroke-1" /></svg>}
        iconClass="ml-[10px] w-[30px]"
        label="Opciones de motivo"
      />
      <div className="absolute left-[1525px] top-[185px] h-[82px] w-[99px] rounded-t-[3px] bg-[#3f3f3f] shadow-[0_1px_3px_rgba(0,0,0,0.6)]">
        <PanelTop />
        <div className="flex h-[11px] items-center justify-center"><Handle /></div>
        <div className="flex h-[28px] items-center text-[10.5px] font-bold text-[#dcdcdc]">
          <svg viewBox="0 0 16 14" className="ml-[13px] h-[14px] w-[16px] fill-[#8c8c8c]"><path d="M1 1l14 6-14 6z" /></svg>
          <span className="ml-[9px]">Acciones</span>
        </div>
        <div className="flex h-[28px] items-center text-[10.5px] font-bold text-[#dcdcdc]">
          <svg viewBox="0 0 16 10" className="ml-[12px] h-[10px] w-[16px] fill-none stroke-[#aaa] stroke-[1.5]"><path d="M6 1H4a4 4 0 000 8h2M10 1h2a4 4 0 010 8h-2M5 5h6" /></svg>
          <span className="ml-[11px]">Enlaces</span>
        </div>
      </div>
      <Trazo />
      <Transformar />

      <div className="absolute left-[1767px] top-[933px] flex h-[116px] w-[116px] items-center justify-center rounded-full border border-[#f5f5f5] bg-white">
        <svg viewBox="1796 972 58 39" className="h-[39px] w-[58px] fill-[#c00000]"><path d="M1796.7 990.7L1809 972.3L1825 992.7L1840.7 972.3L1853.3 990.7L1839 1010.7H1811Z" /></svg>
      </div>
    </div>
  )
}

export default App
